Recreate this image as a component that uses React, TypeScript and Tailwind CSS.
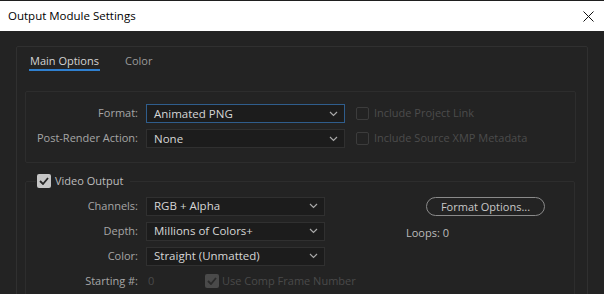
import React from "react";

// ── Small pieces ───────────────────────────────────────────────────────────

function Chevron() {
  return (
    <svg width="9" height="6" viewBox="0 0 9 6" className="shrink-0">
      <polyline points="1,1 4.5,4.5 8,1" fill="none" stroke="#a8a8a8" strokeWidth="1.2" />
    </svg>
  );
}

function Select({ value, width, focused = false }: { value: string; width: string; focused?: boolean }) {
  return (
    <div
      className={`${width} h-[19px] flex items-center justify-between pl-[7px] pr-[6px] bg-[#1c1c1c] border ${
        focused ? "border-[#2f5d8c]" : "border-[#303030]"
      }`}
    >
      <span className="text-[11.5px] text-[#d6d6d6] leading-none">{value}</span>
      <Chevron />
    </div>
  );
}

function Check({ checked = false, disabled = false }: { checked?: boolean; disabled?: boolean }) {
  if (!checked) {
    return <div className="w-[13px] h-[13px] border border-[#3c3c3c] rounded-[2px] shrink-0" />;
  }
  return (
    <div
      className={`w-[14px] h-[14px] rounded-[2px] shrink-0 flex items-center justify-center ${
        disabled ? "bg-[#4a4a4a]" : "bg-[#c6c6c6]"
      }`}
    >
      <svg width="10" height="8" viewBox="0 0 10 8">
        <polyline
          points="1,4 4,7 9,1"
          fill="none"
          stroke={disabled ? "#2a2a2a" : "#262626"}
          strokeWidth="1.8"
        />
      </svg>
    </div>
  );
}

function Row({ label, children, className = "" }: { label: string; children: React.ReactNode; className?: string }) {
  return (
    <div className={`flex items-center whitespace-nowrap ${className}`}>
      <span className="w-[113px] shrink-0 text-right pr-[1px] text-[11px] text-[#a6a6a6]">{label}</span>
      <div className="ml-[7px] flex items-center">{children}</div>
    </div>
  );
}

// ── Main component ─────────────────────────────────────────────────────────

export default function App() {
  return (
    <div
      className="w-[604px] h-[294px] overflow-hidden bg-[#232323] flex flex-col"
      style={{ fontFamily: '"Open Sans", "Noto Sans", sans-serif' }}
    >
      {/* Title bar */}
      <div className="h-[31px] shrink-0 bg-white border-t border-[#1f1f1f] flex items-center justify-between pl-[8px] pr-[10px]">
        <span className="text-[11.5px] text-black">Output Module Settings</span>
        <svg width="11" height="11" viewBox="0 0 11 11">
          <path d="M0.5 0.5 L10.5 10.5 M10.5 0.5 L0.5 10.5" stroke="#111" strokeWidth="1" />
        </svg>
      </div>

      {/* Body */}
      <div className="flex-1 pt-[15px] pl-[16px]">
        <div className="w-[572px] h-[260px] border border-[#303030] rounded-[2px]">
          {/* Tabs */}
          <div className="flex items-end gap-[25px] pl-[12px] pt-[10px] h-[24px]">
            <div className="flex flex-col items-center">
              <span className="text-[11px] text-[#d4d4d4] px-[1px] leading-[14px]">Main Options</span>
              <div className="h-[2px] w-full mt-[1px] bg-[#2f80d0]" />
            </div>
            <span className="text-[11px] text-[#9a9a9a] leading-[14px] mb-[3px]">Color</span>
          </div>

          {/* Format box */}
          <div className="mt-[20px] ml-[8px] w-[551px] h-[72px] border border-[#2d2d2d] rounded-[2px] pt-[12px] flex flex-col gap-[6px]">
            <Row label="Format:">
              <Select value="Animated PNG" width="w-[199px]" focused />
              <div className="ml-[11px] flex items-center gap-[5px]">
                <Check />
                <span className="text-[11px] text-[#4c4c4c]">Include Project Link</span>
              </div>
            </Row>
            <Row label="Post-Render Action:">
              <Select value="None" width="w-[199px]" />
              <div className="ml-[11px] flex items-center gap-[5px]">
                <Check />
                <span className="text-[11px] text-[#4c4c4c]">Include Source XMP Metadata</span>
              </div>
            </Row>
          </div>

          {/* Video output group */}
          <fieldset className="mt-[10px] ml-[8px] w-[550px] h-[140px] border border-[#2d2d2d] rounded-[2px] px-0">
            <legend className="ml-[10px] px-[1px] flex items-center gap-[4px]">
              <Check checked />
              <span className="text-[11px] text-[#bdbdbd] pr-[6px]">Video Output</span>
            </legend>
            <div className="flex pt-[7px]">
              <div className="w-[300px] shrink-0 flex flex-col gap-[6px]">
                <Row label="Channels:">
                  <Select value="RGB + Alpha" width="w-[179px]" />
                </Row>
                <Row label="Depth:">
                  <Select value="Millions of Colors+" width="w-[179px]" />
                </Row>
                <Row label="Color:">
                  <Select value="Straight (Unmatted)" width="w-[179px]" />
                </Row>
                <Row label="Starting #:" className="mt-[1px]">
                  <span className="w-[59px] shrink-0 pl-[2px] text-[11px] text-[#4a4a4a]">0</span>
                  <div className="flex items-center gap-[3px]">
                    <Check checked disabled />
                    <span className="text-[11px] text-[#4a4a4a]">Use Comp Frame Number</span>
                  </div>
                </Row>
              </div>
              <div className="ml-[80px] flex flex-col items-start">
                <button className="ml-[20px] w-[119px] h-[19px] rounded-full border border-[#8a8a8a] text-[11px] text-[#c8c8c8] leading-none">
                  Format Options...
                </button>
                <span className="mt-[9px] text-[11px] text-[#bcbcbc]">Loops: 0</span>
              </div>
            </div>
          </fieldset>
        </div>
      </div>
    </div>
  );
}
